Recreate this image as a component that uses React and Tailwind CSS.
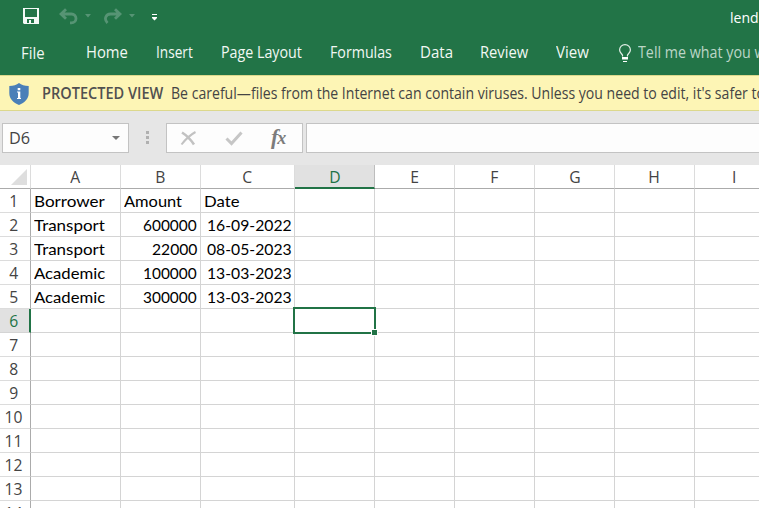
import { useLayoutEffect, useRef } from "react";

// Condenses or widens a line of text so that it takes exactly `w` pixels.
function Fit({ w, children, className = "" }) {
  const ref = useRef(null);
  useLayoutEffect(() => {
    const el = ref.current;
    el.style.transform = `scaleX(${w / el.offsetWidth})`;
  }, [w, children]);
  return (
    <span className={`block shrink-0 ${className}`} style={{ width: w }}>
      <span ref={ref} className="inline-block origin-left whitespace-nowrap align-top">
        {children}
      </span>
    </span>
  );
}

const TABS = [
  ["File", 24, "w-[65px] pt-px"],
  ["Home", 42, "w-[70px]"],
  ["Insert", 37, "w-[65px]"],
  ["Page Layout", 81, "w-[109px]"],
  ["Formulas", 61.5, "w-[90px]"],
  ["Data", 33, "w-[60px]"],
  ["Review", 48.5, "w-[76px]"],
  ["View", 33, "w-[62.5px]"],
];

const COLS = [
  ["A", "w-[90px]"],
  ["B", "w-[80px]"],
  ["C", "w-[94px]"],
  ["D", "w-[80px]"],
  ["E", "w-[80px]"],
  ["F", "w-[80px]"],
  ["G", "w-[80px]"],
  ["H", "w-[80px]"],
  ["I", "w-[80px]"],
];

const DATA = [
  [["Borrower", 70.5], ["Amount", 58.5], ["Date", 35.5]],
  [["Transport", 71], ["600000", 54], ["16-09-2022", 84.5]],
  [["Transport", 71], ["22000", 45], ["08-05-2023", 84.5]],
  [["Academic", 71], ["100000", 54], ["13-03-2023", 84.5]],
  [["Academic", 71], ["300000", 54], ["13-03-2023", 84.5]],
];

const ROWS = Array.from({ length: 14 }, (_, i) => i);

function QuickAccess() {
  return (
    <div className="flex h-[34px] items-start">
      <svg className="ml-[23px] mt-2 shrink-0" width="16" height="16" viewBox="0 0 16 16">
        <path fill="#f4f9f6" fillRule="evenodd" d="M0 0H16V16H1L0 15ZM2 1V9H14V1ZM4 11V15H6V12H8V15H11V11Z" />
      </svg>
      <svg className="ml-5 mt-2 shrink-0" width="19" height="17" viewBox="0 0 19 17" fill="none" stroke="#569474" strokeWidth="2.8">
        <path d="M7 1.2L2 6l5 4.800M2 6h10.500a4.500 4.400 0 0 1 0 8.800h-1.500" />
      </svg>
      <svg className="ml-[7px] mt-3.5 shrink-0" width="6" height="4" viewBox="0 0 6 4">
        <path fill="#569474" d="M0 0H6L3 3.5Z" />
      </svg>
      <svg className="ml-3 mt-2 shrink-0" width="19" height="17" viewBox="0 0 19 17" fill="none" stroke="#569474" strokeWidth="2.8">
        <path d="M12 1.2L17 6l-5 4.8M17 6H7.500C3 6 .5 11 4.500 15" />
      </svg>
      <svg className="ml-[7px] mt-3.5 shrink-0" width="6" height="4" viewBox="0 0 6 4">
        <path fill="#569474" d="M0 0H6L3 3.5Z" />
      </svg>
      <svg className="ml-[17px] mt-3.5 shrink-0" width="6" height="7" viewBox="0 0 6 7">
        <path fill="#fff" d="M0 0H5V1H0ZM0 3H5V4L2.500 6.500L0 4Z" />
      </svg>
      <Fit w={29} className="ml-auto mr-0 mt-1.5 text-[15px] leading-[22px] text-white">lend</Fit>
    </div>
  );
}

export default function App() {
  return (
    <div className="flex h-[508px] w-[759px] flex-col overflow-hidden bg-[#e6e6e6] font-['Open_Sans','Noto_Sans',sans-serif]">
      <header className="h-[75px] shrink-0 bg-[#227447]">
        <QuickAccess />
        <nav className="flex h-[41px] items-start pl-[20.5px] pt-1.5 text-[15.5px] leading-[24px] text-[#f2f8f4]">
          {TABS.map(([label, w, cls]) => (
            <div key={label} className={`shrink-0 ${cls}`}>
              <Fit w={w}>{label}</Fit>
            </div>
          ))}
          <svg className="mt-1 shrink-0" width="14" height="18" viewBox="0 0 14 18" fill="none" stroke="#e4efe8" strokeWidth="1.200">
            <path d="M4.500 12.500V11C3.500 9.500 1.600 8.500 1.600 6a5.400 5.400 0 0 1 10.800 0c0 2.500-1.900 3.500-2.900 5v1.500" />
            <path d="M4 13h6v2.500H4zM5 17h4v1H5z" fill="#fff" stroke="none" />
          </svg>
          <Fit w={128} className="ml-[6px] text-[#bcd6c7]">Tell me what you w</Fit>
        </nav>
      </header>

      <div className="flex h-9 shrink-0 items-center border-y border-[#dcd88c] bg-[#fdf5b5] text-[15.5px] leading-6 text-[#444]">
        <svg className="ml-[9px] mt-0.5 shrink-0" width="20" height="22" viewBox="0 0 20 22">
          <path fill="#4a7fb8" d="M10 0C7.500 2 4.500 3 .3 3v7c0 6 4 9.500 9.700 12 5.700-2.500 9.700-6 9.700-12V3C15.500 3 12.500 2 10 0Z" />
          <path fill="#fff" d="M8.700 5h2.600v2.200H8.700ZM8 8.500h3.300V15H12v1H8v-1h1V9.500H8Z" />
        </svg>
        <Fit w={121} className="ml-[13px] font-semibold text-[#505050]">PROTECTED VIEW</Fit>
        <Fit w={594} className="ml-2">
          Be careful—files from the Internet can contain viruses. Unless you need to edit, it's safer to
        </Fit>
      </div>

      <div className="flex h-[54px] shrink-0 items-start pl-0.5 pt-3">
        <div className="flex h-[30px] w-[127px] shrink-0 items-center border border-[#c3c3c3] bg-[#fdfdfd] pl-1.5 text-[15.5px] text-[#444]">
          <Fit w={21} className="mt-0.5">D6</Fit>
          <svg className="ml-auto mr-2" width="8" height="4" viewBox="0 0 8 4">
            <path fill="#777" d="M0 0H8L4 4Z" />
          </svg>
        </div>
        <div className="ml-[17px] mt-2 flex shrink-0 flex-col gap-0.5">
          <i className="block h-[3px] w-[3px] bg-[#b0b0b0]" />
          <i className="block h-[3px] w-[3px] bg-[#b0b0b0]" />
          <i className="block h-[3px] w-[3px] bg-[#b0b0b0]" />
        </div>
        <div className="ml-[17px] flex h-[30px] w-[137px] shrink-0 items-center border border-[#c3c3c3] bg-[#fdfdfd]">
          <svg className="ml-[13px] shrink-0" width="17" height="15" viewBox="0 0 17 15" fill="none" stroke="#c2c2c2">
            <path strokeWidth="2.600" d="M2 1.500C6 4 11 9 14 13.500" />
            <path strokeWidth="2" d="M15.500 1C10 4 5 9 1.500 13.500" />
          </svg>
          <svg className="ml-[28px] shrink-0" width="18" height="15" viewBox="0 0 18 15" fill="none" stroke="#c6c6c6" strokeWidth="3">
            <path d="M1.500 7.500L6.500 12.500L16.500 1.500" />
          </svg>
          <span className="ml-[28px] -mt-0.5 font-['Liberation_Serif',serif] text-[22px] font-bold italic leading-none tracking-[-1px] text-[#7c7c7c]">
            f<span className="text-[18px]">x</span>
          </span>
        </div>
        <div className="ml-[3px] h-[30px] w-[460px] shrink-0 border border-[#c3c3c3] bg-[#fdfdfd]" />
      </div>

      <main className="flex min-h-0 flex-1 flex-col bg-white">
        <div className="flex h-6 shrink-0">
          <div className="flex w-[31px] shrink-0 items-end justify-end border-b border-r border-b-[#ababab] border-r-[#dcdcdc] pb-[3px] pr-[3px]">
            <svg width="16" height="16" viewBox="0 0 16 16">
              <path fill="#dedede" d="M16 0V16H0Z" />
            </svg>
          </div>
          {COLS.map(([c, w]) => (
            <div
              key={c}
              className={`flex shrink-0 justify-center border-r text-[16.5px] leading-[24px] ${w} ${
                c === "D"
                  ? "border-b-2 border-b-[#217346] border-r-[#bdbdbd] bg-[#e1e1e1] pl-px text-[#217346]"
                  : "border-b border-b-[#ababab] border-r-[#dcdcdc] text-[#444]"
              }`}
            >
              <span className="inline-block scale-x-95">{c}</span>
            </div>
          ))}
        </div>
        {ROWS.map((r) => (
          <div key={r} className="flex h-6 shrink-0">
            <div
              className={`flex w-[31px] shrink-0 justify-center border-b text-[16.5px] leading-[24px] ${
                r === 5
                  ? "border-r-2 border-b-[#d4d4d4] border-r-[#217346] bg-[#e1e1e1] pr-[2px] text-[#217346]"
                  : "border-r border-b-[#dcdcdc] border-r-[#ababab] pr-[3px] text-[#444]"
              }`}
            >
              <span className="inline-block scale-x-95">{r + 1}</span>
            </div>
            {COLS.map(([c, w], ci) => {
              const cell = DATA[r] && DATA[r][ci];
              const right = r > 0 && ci > 0;
              return (
                <div
                  key={c}
                  className={`relative flex shrink-0 border-b border-r border-[#d4d4d4] pl-[3px] pr-[3px] font-['Lato',sans-serif] text-[16px] leading-[24px] text-black ${w} ${
                    right ? "justify-end" : ""
                  }`}
                >
                  {cell && <Fit w={cell[1]}>{cell[0]}</Fit>}
                  {r === 5 && c === "D" && (
                    <div className="absolute -left-[2px] -top-[2px] z-10 h-[27px] w-[83px] border-2 border-[#217346]">
                      <div className="absolute -bottom-[4px] -right-[4px] h-[7px] w-[7px] border border-white bg-[#217346]" />
                    </div>
                  )}
                </div>
              );
            })}
          </div>
        ))}
      </main>
    </div>
  );
}
